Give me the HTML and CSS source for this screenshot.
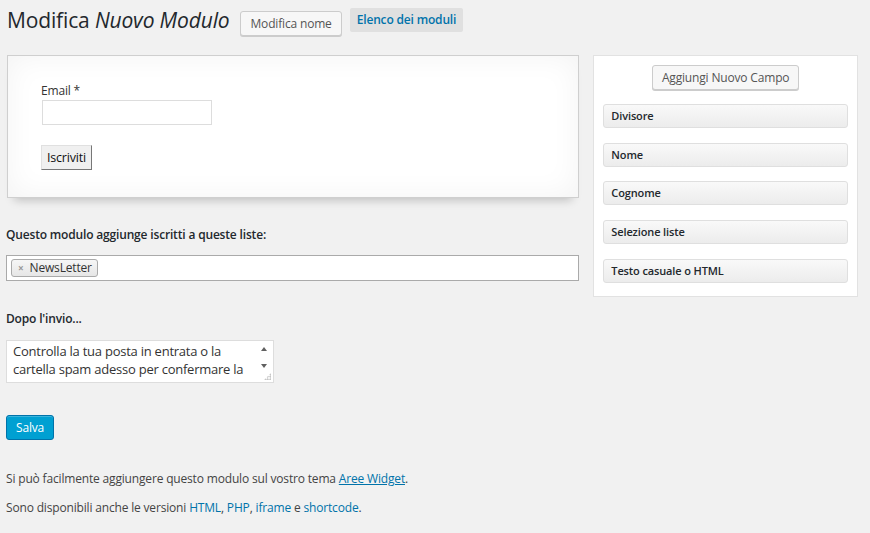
FILE: index.html
```html
<!DOCTYPE html>
<html lang="it">
<head>
<meta charset="utf-8">
<title>Modifica Nuovo Modulo</title>
<link rel="stylesheet" href="styles.css">
</head>
<body>
<div class="wrap">
  <div class="header">
    <h1 class="title">Modifica <em>Nuovo Modulo</em></h1>
    <button class="btn btn-secondary">Modifica nome</button>
    <a class="tab-link" href="#">Elenco dei moduli</a>
  </div>

  <div class="columns">
    <div class="main">
      <div class="preview">
        <label class="preview-label">Email *</label>
        <input class="preview-input" type="text">
        <button class="native-btn">Iscriviti</button>
      </div>

      <h3 class="section-title lists-title">Questo modulo aggiunge iscritti a queste liste:</h3>
      <div class="token-box">
        <span class="token"><span class="token-x">×</span>NewsLetter</span>
      </div>

      <h3 class="section-title after-title">Dopo l'invio...</h3>
      <div class="textarea-wrap">
        <textarea class="after-text" rows="2">Controlla la tua posta in entrata o la cartella spam adesso per confermare la tua iscrizione.</textarea>
        <span class="fake-scroll">
          <span class="arrow-up"></span>
          <span class="arrow-down"></span>
        </span>
        <span class="grip"></span>
      </div>

      <div class="save-row"><button class="btn-primary">Salva</button></div>

      <p class="note">Si può facilmente aggiungere questo modulo sul vostro tema <a class="underlined" href="#">Aree Widget</a>.</p>
      <p class="note">Sono disponibili anche le versioni <a href="#">HTML</a>, <a href="#">PHP</a>, <a href="#">iframe</a> e <a href="#">shortcode</a>.</p>
    </div>

    <div class="side">
      <div class="side-top"><button class="btn btn-secondary">Aggiungi Nuovo Campo</button></div>
      <div class="field-list">
        <div class="field">Divisore</div>
        <div class="field">Nome</div>
        <div class="field">Cognome</div>
        <div class="field">Selezione liste</div>
        <div class="field">Testo casuale o HTML</div>
      </div>
    </div>
  </div>
</div>
</body>
</html>
```

FILE: styles.css
```css
html, body {
  margin: 0;
  padding: 0;
  background: #f1f1f1;
}
body {
  font-family: "Open Sans", "Noto Sans", sans-serif;
  font-size: 12px;
  letter-spacing: -0.17px;
  color: #444;
}
.wrap {
  padding: 6px 12px 0 6px;
}
.header {
  display: flex;
  align-items: flex-start;
  height: 49px;
}
.title {
  margin: 0 0 0 1px;
  font-size: 21px;
  font-weight: 400;
  letter-spacing: -0.15px;
  line-height: 29px;
  color: #23282d;
}
.title em {
  font-style: italic;
}
.btn {
  font-family: "Open Sans", "Noto Sans", sans-serif;
  font-size: 12px;
  letter-spacing: -0.17px;
  line-height: 23px;
  height: 25px;
  padding: 0 9px;
  border: 1px solid #ccc;
  border-radius: 3px;
  background: #f7f7f7;
  color: #555;
  box-shadow: 0 1px 0 #ccc;
  cursor: pointer;
}
.header .btn {
  margin: 5px 0 0 11px;
}
.tab-link {
  margin: 2px 0 0 8px;
  height: 24px;
  line-height: 24px;
  padding: 0 7px;
  background: #e0e0e0;
  color: #0073aa;
  font-weight: 600;
  font-size: 12px;
  text-decoration: none;
  border-radius: 2px;
}
.columns {
  display: flex;
  align-items: flex-start;
  gap: 14px;
}
.main {
  width: 574px;
}
.preview {
  height: 143px;
  box-sizing: border-box;
  padding: 27px 0 0 33px;
  margin-left: 1px;
  background: #fff;
  border: 1px solid #cfcfcf;
  box-shadow: inset 0 0 30px rgba(0,0,0,0.05), 0 9px 9px -7px rgba(0,0,0,0.22);
  display: flex;
  flex-direction: column;
  align-items: flex-start;
}
.preview-label {
  font-size: 12px;
  line-height: 16px;
  color: #333;
}
.preview-input {
  margin: 1px 0 0 1px;
  width: 170px;
  height: 25px;
  box-sizing: border-box;
  border: 1px solid #ddd;
  background: #fff;
}
.native-btn {
  margin-top: 20px;
  height: 25px;
  padding: 0 5px;
  font-family: "Open Sans", "Noto Sans", sans-serif;
  font-size: 12.5px;
  letter-spacing: -0.2px;
  color: #111;
  background: #f0f0f0;
  border: 1px solid;
  border-color: #e0e0e0 #777 #777 #e0e0e0;
}
.section-title {
  margin: 0;
  font-size: 12px;
  font-weight: 600;
  color: #23282d;
  line-height: 18px;
}
.lists-title {
  margin-top: 28px;
}
.token-box {
  margin-top: 11px;
  height: 26px;
  box-sizing: border-box;
  border: 1px solid #aaa;
  background: #fff;
  padding: 3px 4px;
  display: flex;
  align-items: flex-start;
}
.token {
  display: inline-flex;
  align-items: center;
  height: 18px;
  box-sizing: border-box;
  padding: 0 5px 0 6px;
  border: 1px solid #aaa;
  border-radius: 3px;
  background: linear-gradient(#f6f6f6, #e6e6e6);
  color: #333;
  font-size: 12px;
  line-height: 16px;
}
.token-x {
  color: #999;
  font-weight: 700;
  font-size: 10px;
  margin-right: 6px;
}
.after-title {
  margin-top: 29px;
}
.textarea-wrap {
  position: relative;
  margin-top: 12px;
  width: 268px;
  height: 43px;
}
.after-text {
  display: block;
  width: 268px;
  height: 43px;
  box-sizing: border-box;
  padding: 1px 22px 0 6px;
  border: 1px solid #ddd;
  background: #fff;
  font-family: "Open Sans", "Noto Sans", sans-serif;
  font-size: 13px;
  letter-spacing: -0.24px;
  line-height: 18px;
  color: #333;
  resize: none;
  overflow: hidden;
}
.fake-scroll {
  position: absolute;
  top: 1px;
  right: 1px;
  width: 17px;
  height: 34px;
}
.arrow-up, .arrow-down {
  position: absolute;
  left: 5px;
  width: 0;
  height: 0;
  border-left: 3.5px solid transparent;
  border-right: 3.5px solid transparent;
}
.arrow-up {
  top: 6px;
  border-bottom: 4px solid #606060;
}
.arrow-down {
  top: 23px;
  border-top: 4px solid #606060;
}
.grip {
  position: absolute;
  right: 3px;
  bottom: 3px;
  width: 7px;
  height: 7px;
  background:
    radial-gradient(circle, #bbb 0.8px, transparent 1px) 0 0 / 2.5px 2.5px;
  clip-path: polygon(100% 0, 100% 100%, 0 100%);
}
.save-row {
  margin-top: 32px;
}
.btn-primary {
  height: 25px;
  padding: 0 9px;
  font-family: "Open Sans", "Noto Sans", sans-serif;
  font-size: 12px;
  letter-spacing: -0.17px;
  color: #fff;
  background: #00a0d2;
  border: 1px solid #0073aa;
  border-radius: 3px;
  box-shadow: inset 0 1px 0 rgba(120,200,230,.5);
}
.note {
  margin: 0;
  line-height: 16px;
}
.save-row + .note {
  margin-top: 31px;
}
.note + .note {
  margin-top: 13px;
}
.note a {
  color: #0073aa;
  text-decoration: none;
}
.note a.underlined {
  text-decoration: underline;
}
.side {
  width: 265px;
  box-sizing: border-box;
  background: #fff;
  border: 1px solid #e2e2e2;
  padding: 9px 9px 13px;
}
.side-top {
  display: flex;
  justify-content: center;
}
.field-list {
  margin-top: 14px;
  display: flex;
  flex-direction: column;
  gap: 14.7px;
}
.field {
  height: 24px;
  box-sizing: border-box;
  border: 1px solid #dfdfdf;
  border-radius: 3px;
  background: linear-gradient(#f9f9f9, #ececec);
  padding: 0 7px;
  font-size: 11px;
  font-weight: 600;
  letter-spacing: -0.12px;
  line-height: 22px;
  color: #23282d;
}
```
